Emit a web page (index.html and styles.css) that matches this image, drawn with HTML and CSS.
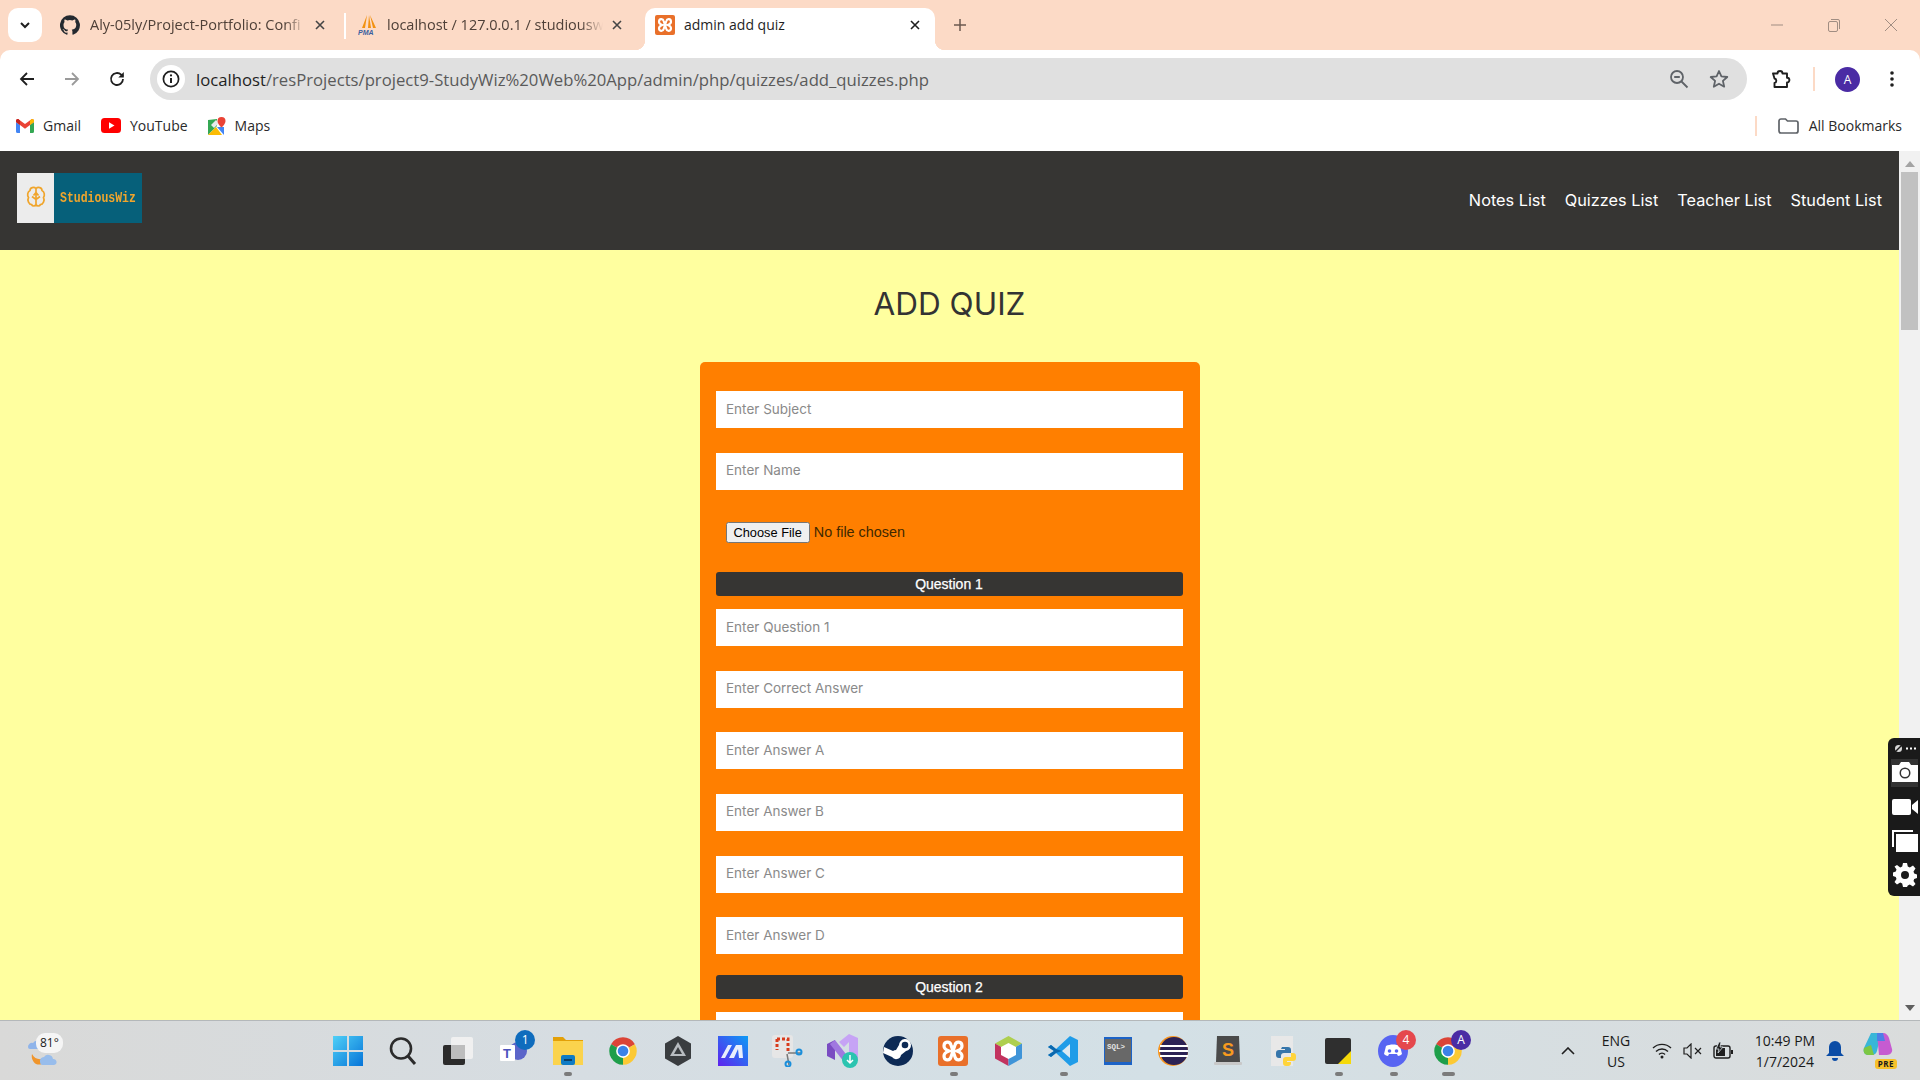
FILE: index.html
```html
<!DOCTYPE html>
<html lang="en">
<head>
<meta charset="utf-8">
<title>admin add quiz</title>
<link rel="stylesheet" href="styles.css">
</head>
<body>
<svg class="sprite" width="0" height="0">
  <symbol id="chrome" viewBox="0 0 48 48">
    <path fill="#db4437" d="M4.95 13A22 22 0 0 1 43.05 13L24 24Z"/>
    <path fill="#fcc934" d="M43.05 13A22 22 0 0 1 24 46L24 24Z"/>
    <path fill="#1e9e4a" d="M24 46A22 22 0 0 1 4.95 13L24 24Z"/>
    <circle cx="24" cy="24" r="11" fill="#fff"/>
    <circle cx="24" cy="24" r="8.5" fill="#3b82e8"/>
  </symbol>
  <symbol id="xampp" viewBox="0 0 30 30">
    <rect width="30" height="30" rx="3" fill="#e9702a"/>
    <path fill="none" stroke="#fff" stroke-width="3.2" d="M6 10c0-5 6-5 7-1l4 12c1 4 7 4 7-1 0-3-2-4-5-5 3-1 5-2 5-5 0-5-6-5-7-1L13 21c-1 4-7 4-7-1 0-3 2-4 5-5-3-1-5-2-5-5z"/>
  </symbol>
</svg>

<header class="tabstrip">
  <button class="tab-list" aria-label="Tabs">
    <svg width="14" height="14" viewBox="0 0 14 14"><path d="M3 5l4 4 4-4" fill="none" stroke="#1f1f1f" stroke-width="2"/></svg>
  </button>
  <div class="tab tab-first">
    <svg class="tab-icon" width="20" height="20" viewBox="0 0 24 24"><path fill="#24292f" d="M12 .3a12 12 0 0 0-3.8 23.4c.6.1.8-.3.8-.6v-2c-3.3.7-4-1.6-4-1.6-.6-1.4-1.4-1.8-1.4-1.8-1-.7.1-.7.1-.7 1.2.1 1.8 1.2 1.8 1.2 1 1.8 2.8 1.3 3.5 1 .1-.8.4-1.3.7-1.6-2.7-.3-5.500-1.3-5.500-6 0-1.2.5-2.3 1.3-3.1-.2-.4-.6-1.6 0-3.2 0 0 1-.3 3.4 1.2a11.500 11.500 0 0 1 6 0c2.3-1.5 3.3-1.2 3.3-1.2.6 1.6.2 2.8 0 3.2.9.8 1.3 1.9 1.3 3.2 0 4.6-2.8 5.6-5.500 5.900.5.4.9 1 .9 2.2v3.3c0 .3.1.7.8.6A12 12 0 0 0 12 .3"/></svg>
    <span class="tab-title">Aly-05ly/Project-Portfolio: Confi</span>
    <svg class="tab-close" width="12" height="12" viewBox="0 0 12 12"><path d="M2 2l8 8M10 2l-8 8" stroke="#454545" stroke-width="1.6"/></svg>
  </div>
  <span class="tab-sep"></span>
  <div class="tab tab-second">
    <svg class="tab-icon" width="20" height="20" viewBox="0 0 20 20">
      <path fill="#f29111" d="M9 0L4 13h3zM11 0l-1 13h3zM12 0l3 13h3z"/>
      <text x="0" y="19.5" class="pma">PMA</text>
    </svg>
    <span class="tab-title">localhost / 127.0.0.1 / studiousw</span>
    <svg class="tab-close" width="12" height="12" viewBox="0 0 12 12"><path d="M2 2l8 8M10 2l-8 8" stroke="#454545" stroke-width="1.6"/></svg>
  </div>
  <div class="tab tab-active">
    <svg class="tab-icon" width="20" height="20"><use href="#xampp"/></svg>
    <span class="tab-title tab-title-full">admin add quiz</span>
    <svg class="tab-close" width="12" height="12" viewBox="0 0 12 12"><path d="M2 2l8 8M10 2l-8 8" stroke="#1f1f1f" stroke-width="1.6"/></svg>
  </div>
  <svg class="new-tab" width="14" height="14" viewBox="0 0 14 14"><path d="M7 1v12M1 7h12" stroke="#6b5a50" stroke-width="1.5"/></svg>
  <div class="win-controls">
    <svg width="14" height="14" viewBox="0 0 14 14"><path d="M1 7h12" stroke="#a08d82" stroke-width="1"/></svg>
    <svg width="14" height="14" viewBox="0 0 14 14"><rect x="1.5" y="3.5" width="9" height="10" rx="1.5" fill="none" stroke="#a08d82"/><path d="M4 1.5h7a1.5 1.5 0 0 1 1.5 1.5v8" fill="none" stroke="#a08d82"/></svg>
    <svg width="14" height="14" viewBox="0 0 14 14"><path d="M1 1l12 12M13 1L1 13" stroke="#a08d82" stroke-width="1"/></svg>
  </div>
</header>

<nav class="toolbar">
  <svg class="tool-btn" width="18" height="18" viewBox="0 0 18 18"><path d="M16 9H3M9 3L3 9l6 6" fill="none" stroke="#1f1f1f" stroke-width="1.8"/></svg>
  <svg class="tool-btn" width="18" height="18" viewBox="0 0 18 18"><path d="M2 9h13M9 3l6 6-6 6" fill="none" stroke="#9a9a9a" stroke-width="1.8"/></svg>
  <svg class="tool-btn" width="18" height="18" viewBox="0 0 18 18"><path d="M15 9a6 6 0 1 1-1.8-4.3L15 6.5" fill="none" stroke="#1f1f1f" stroke-width="1.8"/><path d="M15.8 2v5.5h-5.5z" fill="#1f1f1f"/></svg>
  <div class="omnibox">
    <span class="site-info">
      <svg width="18" height="18" viewBox="0 0 18 18"><circle cx="9" cy="9" r="7.6" fill="none" stroke="#1f1f1f" stroke-width="1.7"/><path d="M9 8v5" stroke="#1f1f1f" stroke-width="2"/><circle cx="9" cy="5.4" r="1.1" fill="#1f1f1f"/></svg>
    </span>
    <span class="url"><b class="url-host">localhost</b>/resProjects/project9-StudyWiz%20Web%20App/admin/php/quizzes/add_quizzes.php</span>
    <svg class="omni-icon" width="20" height="20" viewBox="0 0 20 20"><circle cx="8" cy="8" r="6" fill="none" stroke="#5f6368" stroke-width="1.8"/><path d="M5.2 8h5.6M12.5 12.5l6 6" stroke="#5f6368" stroke-width="1.8"/></svg>
    <svg class="omni-icon" width="20" height="20" viewBox="0 0 20 20"><path d="M10 2l2.4 5.4 5.9.6-4.4 3.9 1.3 5.8L10 14.7l-5.2 3 1.3-5.8L1.700 8l5.900-.6z" fill="none" stroke="#5f6368" stroke-width="1.8" stroke-linejoin="round"/></svg>
  </div>
  <svg class="ext" width="20" height="20" viewBox="0 0 20 20"><path d="M2 4.500h4.500a2.500 2.500 0 0 1 5 0H16v4.200a2.400 2.400 0 0 1 0 4.800V18H3.500v-4a2.300 2.300 0 0 0 0-4.500z" fill="none" stroke="#1f1f1f" stroke-width="1.900" stroke-linejoin="round"/></svg>
  <span class="tool-sep"></span>
  <span class="avatar">A</span>
  <svg class="menu-dots" width="6" height="18" viewBox="0 0 6 18"><circle cx="3" cy="3" r="1.800" fill="#1f1f1f"/><circle cx="3" cy="9" r="1.800" fill="#1f1f1f"/><circle cx="3" cy="15" r="1.800" fill="#1f1f1f"/></svg>
</nav>

<div class="bookmarks">
  <span class="bookmark">
    <svg width="18" height="14" viewBox="0 0 18 14"><path fill="#4285f4" d="M0 3v9.500A1.500 1.500 0 0 0 1.500 14H4V6z"/><path fill="#34a853" d="M14 6v8h2.500a1.500 1.500 0 0 0 1.500-1.500V3z"/><path fill="#ea4335" d="M0 3l4 3 5 3.800L14 6l4-3V1.800C18 .3 16.300-.500 15.200.4L9 5 2.800.4C1.700-.500 0 .3 0 1.800z"/><path fill="#c5221f" d="M0 3l4 3V1.400L2.800.4C1.700-.500 0 .3 0 1.800z"/><path fill="#fbbc04" d="M14 1.400V6l4-3V1.800C18 .3 16.300-.500 15.200.4z"/></svg>
    Gmail
  </span>
  <span class="bookmark">
    <svg width="20" height="15" viewBox="0 0 20 15"><rect width="20" height="15" rx="3.500" fill="#f00"/><path d="M8 4.200v6.600l5.500-3.300z" fill="#fff"/></svg>
    YouTube
  </span>
  <span class="bookmark">
    <svg width="18" height="18" viewBox="0 0 18 18"><path fill="#34a853" d="M0 3l9-1v7l-9 9z"/><path fill="#fbbc04" d="M0 18l8-8 6 8z"/><path fill="#4285f4" d="M9 10l7 0v8z"/><path fill="#e8eaed" d="M3 8l5-5 3 3-5 5z"/><path fill="#ea4335" d="M13.500 0A4 4 0 0 0 9.500 4c0 3 4 6.500 4 6.500s4-3.500 4-6.500a4 4 0 0 0-4-4z"/></svg>
    Maps
  </span>
  <span class="bookmark-sep"></span>
  <span class="bookmark all-bookmarks">
    <svg width="21" height="16" viewBox="0 0 21 16"><path d="M1 3a2 2 0 0 1 2-2h4.500l2 2H18a2 2 0 0 1 2 2v8a2 2 0 0 1-2 2H3a2 2 0 0 1-2-2z" fill="none" stroke="#5f6368" stroke-width="1.700"/></svg>
    All Bookmarks
  </span>
</div>

<div class="viewport">
  <div class="page">
    <header class="site-nav">
      <div class="logo">
        <span class="logo-mark">
          <svg width="20" height="25" viewBox="0 0 20 24"><path d="M10 3C8 1 4 2 4 5 1.500 6 1 10 2.500 12 1 15 3 19 5.500 19c1 2 3.500 2 4.500 0 1 2 3.500 2 4.500 0 2.500 0 4.500-4 3-7C19 10 18.500 6 16 5c0-3-4-4-6-2zM10 3v18M6 11l4 3 4-3M10 7l-2.500 3M10 7l2.500 3" fill="none" stroke="#f0a52c" stroke-width="1.700"/></svg>
        </span>
        <span class="logo-text">StudiousWiz</span>
      </div>
      <ul class="nav-links">
        <li>Notes List</li>
        <li>Quizzes List</li>
        <li>Teacher List</li>
        <li>Student List</li>
      </ul>
    </header>
    <main class="content">
      <h1 class="title">ADD QUIZ</h1>
      <form class="quiz-card">
        <div class="fields intro">
          <input class="field" type="text" placeholder="Enter Subject">
          <input class="field" type="text" placeholder="Enter Name">
          <input class="file-field" type="file">
        </div>
        <section class="question">
          <h2 class="question-bar">Question 1</h2>
          <div class="fields">
            <input class="field" type="text" placeholder="Enter Question 1">
            <input class="field" type="text" placeholder="Enter Correct Answer">
            <input class="field" type="text" placeholder="Enter Answer A">
            <input class="field" type="text" placeholder="Enter Answer B">
            <input class="field" type="text" placeholder="Enter Answer C">
            <input class="field" type="text" placeholder="Enter Answer D">
          </div>
        </section>
        <section class="question">
          <h2 class="question-bar">Question 2</h2>
          <div class="fields">
            <input class="field" type="text" placeholder="Enter Question 2">
          </div>
        </section>
      </form>
    </main>
  </div>
  <div class="scrollbar">
    <svg width="10" height="6" viewBox="0 0 10 6"><path d="M5 0l5 6H0z" fill="#a3a3a3"/></svg>
    <span class="scroll-thumb"></span>
    <svg class="scroll-down" width="10" height="6" viewBox="0 0 10 6"><path d="M5 6L0 0h10z" fill="#5f5f5f"/></svg>
  </div>
  <aside class="capture-widget">
    <div class="capture-head">
      <svg width="11" height="11" viewBox="0 0 11 11"><circle cx="5.500" cy="5.500" r="3.500" fill="#d8d8d8"/><path d="M1 10L10 1" stroke="#1a1a1a" stroke-width="1.500"/></svg>
      <svg width="10" height="3" viewBox="0 0 10 3"><path d="M0 1.500h2M4 1.500h2M8 1.500h2" stroke="#fff" stroke-width="2"/></svg>
    </div>
    <span class="capture-btn capture-on">
      <svg width="26" height="20" viewBox="0 0 26 20"><path fill="#fff" fill-rule="evenodd" d="M0 3h7l2-3h8l2 3h7v17H0zM13 5.500a5.500 5.500 0 1 0 0 11 5.500 5.500 0 0 0 0-11zM13 7a4 4 0 1 1 0 8 4 4 0 0 1 0-8z"/></svg>
    </span>
    <span class="capture-btn">
      <svg width="26" height="18" viewBox="0 0 26 18"><rect width="19" height="16" y="1" rx="2" fill="#fff"/><path d="M20 7l6-5v14l-6-5z" fill="#fff"/></svg>
    </span>
    <span class="capture-btn">
      <svg width="26" height="22" viewBox="0 0 26 22"><path d="M0 0h21v2H2v15H0z" fill="#fff"/><path d="M4 4h22v18H4z" fill="#fff"/></svg>
    </span>
    <span class="capture-btn">
      <svg width="24" height="24" viewBox="0 0 24 24"><path fill="#fff" fill-rule="evenodd" d="M10 0h4l.8 3.500 2 .9L20 2.500l2.500 3-2 3 .7 2.100 2.800.9v3.500l-2.800.9-.7 2.100 2 3-2.500 2.500-3.200-1.900-2 .9L14 24h-4l-.8-3.500-2-.9L4 21.500 1.500 19l2-3-.7-2.100L0 13v-3.500l2.800-.9.7-2.100-2-3L4 2l3.200 2.400 2-.9zM12 8a4 4 0 1 0 0 8 4 4 0 0 0 0-8z"/></svg>
    </span>
  </aside>
</div>

<footer class="taskbar">
  <div class="weather">
    <svg width="36" height="36" viewBox="0 0 36 36"><path fill="#8fb4ea" d="M2 13a4 4 0 0 1 5-4 5 5 0 0 1 9 2v4H4a2 2 0 0 1-2-2z"/><path fill="#f0952b" d="M6 20c3 6 10 7 16 2-1 7-7 10-12 8-3-2-5-6-4-10z"/><path fill="#98bdec" d="M14 28a4 4 0 0 1 4-5 5 5 0 0 1 9 2 3 3 0 0 1 1 6H16a3 3 0 0 1-2-3z"/></svg>
    <span class="weather-temp">81°</span>
  </div>
  <div class="apps">
    <span class="app">
      <svg width="30" height="30" viewBox="0 0 30 30"><defs><linearGradient id="w" x1="0" y1="0" x2="1" y2="1"><stop offset="0" stop-color="#4fd0f7"/><stop offset="1" stop-color="#0674d8"/></linearGradient></defs><path fill="url(#w)" d="M0 0h14v14H0zM16 0h14v14H16zM0 16h14v14H0zM16 16h14v14H16z"/></svg>
    </span>
    <span class="app">
      <svg width="30" height="30" viewBox="0 0 30 30"><circle cx="13" cy="12.500" r="10" fill="none" stroke="#2b2b2b" stroke-width="2.600"/><path d="M20 20l7 8" stroke="#2b2b2b" stroke-width="3"/></svg>
    </span>
    <span class="app">
      <svg width="30" height="30" viewBox="0 0 30 30"><rect x="8" y="1" width="22" height="22" rx="2" fill="#f0f0f0"/><rect y="9" width="22" height="20" rx="2" fill="#2b2b2b"/><rect x="8" y="9" width="14" height="14" fill="#bdbdbd"/></svg>
    </span>
    <span class="app">
      <svg width="30" height="30" viewBox="0 0 30 30"><circle cx="20" cy="15" r="9" fill="#5b65c9"/><circle cx="24" cy="8" r="4" fill="#7b83eb"/><rect x="2" y="9" width="15" height="16" rx="1" fill="#fff"/><text x="5" y="22" class="teams-t">T</text></svg>
      <span class="badge badge-blue">1</span>
    </span>
    <span class="app">
      <svg width="30" height="30" viewBox="0 0 30 30"><path d="M0 1h10l3 3h17v3H0z" fill="#e3a008"/><path d="M0 5h30v24H0z" fill="#fbd34d"/><rect x="8" y="19" width="14" height="10" rx="2" fill="#0f7bc4"/><rect x="11" y="23" width="8" height="2" fill="#0a3e66"/></svg>
      <span class="run-dot"></span>
    </span>
    <span class="app">
      <svg width="30" height="30"><use href="#chrome"/></svg>
    </span>
    <span class="app">
      <svg width="26" height="30" viewBox="0 0 26 30"><path d="M13 0l13 7.500v15L13 30 0 22.500v-15z" fill="#3a3d40"/><path d="M13 6l8 14H5z" fill="#b8bcc0"/><path d="M13 11l4 7H9z" fill="#3a3d40"/></svg>
    </span>
    <span class="app">
      <svg width="30" height="30" viewBox="0 0 30 30"><defs><linearGradient id="m" x1="0" y1="1" x2="1" y2="0"><stop offset="0" stop-color="#5f22ee"/><stop offset="1" stop-color="#0c9bf5"/></linearGradient></defs><rect width="30" height="30" fill="url(#m)"/><path d="M3 22L10 9h4L7 22zM11 22l7-13h6l1 13h-4l-1-9-4 9z" fill="#e9eefc"/></svg>
    </span>
    <span class="app">
      <svg width="32" height="32" viewBox="0 0 32 32"><rect width="21" height="23" x="0" y="0" rx="3" fill="#e6e6e6"/><path d="M5 4h11v13M5 4v11" fill="none" stroke="#d83b1c" stroke-width="3" stroke-dasharray="3 2"/><path d="M15 19l2 11M16 18h14" stroke="#7a7a7a" stroke-width="1.500"/><circle cx="27" cy="17" r="2.500" fill="none" stroke="#1a8fdc" stroke-width="2"/><circle cx="16" cy="29" r="2.500" fill="none" stroke="#1a8fdc" stroke-width="2"/></svg>
    </span>
    <span class="app">
      <svg width="32" height="34" viewBox="0 0 32 34"><path d="M0 10l8-4v20l-8-4z" fill="#7a4cc2"/><path d="M8 6l14 18-5 4L3 10z" fill="#a078e0"/><path d="M22 0l9 4v22l-9 4-5-3 5-3V8l-5 5-5-5z" fill="#c6a3f5"/><circle cx="23" cy="26" r="8" fill="#2bc4b0"/><path d="M23 21v8M20 26l3 3 3-3" fill="none" stroke="#fff" stroke-width="1.500"/></svg>
    </span>
    <span class="app">
      <svg width="30" height="30" viewBox="0 0 30 30"><circle cx="15" cy="15" r="15" fill="#0d2a55"/><path d="M0 17l9 4a5 5 0 0 0 9-2l5-4a6 6 0 1 0-7-6l-3 5a5 5 0 0 0-3 1L1 11z" fill="#fff"/><circle cx="22" cy="9" r="3.300" fill="#0d2a55"/></svg>
    </span>
    <span class="app">
      <svg width="30" height="30"><use href="#xampp"/></svg>
      <span class="run-dot"></span>
    </span>
    <span class="app">
      <svg width="27" height="30" viewBox="0 0 27 30"><path d="M13.500 0L27 7.500 13.500 15 0 7.500z" fill="#aecf4f"/><path d="M0 7.500L13.500 15v15L0 22.500z" fill="#c2335f"/><path d="M27 7.500L13.500 15v15L27 22.500z" fill="#3f94d8"/><path d="M13.500 7L21 11v8l-7.500 4L6 19v-8z" fill="#fff"/></svg>
    </span>
    <span class="app">
      <svg width="30" height="30" viewBox="0 0 30 30"><path d="M22 0l8 4v22l-8 4L8 17l-5 4-3-2 6-4-6-4 3-2 5 4z" fill="#1f9ce8"/><path d="M22 8l-8 7 8 7z" fill="#dbe9f2"/><path d="M3 9L0 11l6 4-6 4 3 2 5-4 6-2-6-2z" fill="#0c68ae"/></svg>
      <span class="run-dot"></span>
    </span>
    <span class="app">
      <svg width="28" height="28" viewBox="0 0 28 28"><rect width="28" height="28" fill="#1c63c7"/><rect x="1" y="2" width="26" height="23" fill="#686868"/><text x="3" y="12" class="sql-t">SQL&gt;</text></svg>
    </span>
    <span class="app">
      <svg width="30" height="30" viewBox="0 0 30 30"><circle cx="15" cy="15" r="15" fill="#f7941e"/><circle cx="16" cy="15" r="14" fill="#2c2255"/><path d="M2 10h28M1 15h30M2 20h28" stroke="#fff" stroke-width="2"/></svg>
    </span>
    <span class="app">
      <svg width="28" height="30" viewBox="0 0 28 30"><path d="M3 0h22l1 26H2z" fill="#4a4a4a"/><rect y="26" width="28" height="3" rx="1" fill="#c8c8c8"/><text x="8" y="20" class="sublime-t">S</text></svg>
    </span>
    <span class="app">
      <svg width="30" height="30" viewBox="0 0 30 30"><rect x="3" width="22" height="30" fill="#e8e8e8"/><path d="M14 11h6a3 3 0 0 1 3 3v3h-7a3 3 0 0 0-3 3v2h-2a3 3 0 0 1-3-3v-2a3 3 0 0 1 3-3h6v-1h-4z" fill="#3776ab"/><path d="M23 17h2a3 3 0 0 1 3 3v2a3 3 0 0 1-3 3h-6v1h4v1a3 3 0 0 1-3 3h-2a3 3 0 0 1-3-3v-3a3 3 0 0 1 3-3h5z" fill="#ffd43b"/></svg>
    </span>
    <span class="app">
      <svg width="26" height="26" viewBox="0 0 26 26"><rect width="26" height="26" rx="2" fill="#2f2f2f"/><path d="M13 26l13-13v13z" fill="#f5d90a"/></svg>
      <span class="run-dot"></span>
    </span>
    <span class="app">
      <svg width="30" height="32" viewBox="0 0 30 32"><ellipse cx="15" cy="16" rx="15" ry="16" fill="#5865f2"/><path d="M8 11c4-2 10-2 14 0l2 8c-1 1-3 2-4 2l-1-2H11l-1 2c-1 0-3-1-4-2z" fill="#fff"/><circle cx="11.500" cy="16" r="1.800" fill="#5865f2"/><circle cx="18.500" cy="16" r="1.800" fill="#5865f2"/></svg>
      <span class="badge badge-red">4</span>
      <span class="run-dot"></span>
    </span>
    <span class="app">
      <svg width="30" height="30"><use href="#chrome"/></svg>
      <span class="badge badge-purple">A</span>
      <span class="run-dot run-wide"></span>
    </span>
  </div>
  <div class="tray">
    <svg class="tray-caret" width="14" height="8" viewBox="0 0 14 8"><path d="M1 7l6-6 6 6" fill="none" stroke="#1f1f1f" stroke-width="1.600"/></svg>
    <div class="tray-lang">ENG<br>US</div>
    <svg class="tray-wifi" width="20" height="16" viewBox="0 0 20 16"><path d="M1 5a13 13 0 0 1 18 0M4 8.500a8.500 8.500 0 0 1 12 0M7 11.500a4 4 0 0 1 6 0" fill="none" stroke="#1f1f1f" stroke-width="1.400"/><circle cx="10" cy="14" r="1.500" fill="#1f1f1f"/></svg>
    <svg class="tray-vol" width="20" height="16" viewBox="0 0 20 16"><path d="M1 5h3l4-4v14l-4-4H1z" fill="none" stroke="#1f1f1f" stroke-width="1.200"/><path d="M12 5l6 6M18 5l-6 6" stroke="#1f1f1f" stroke-width="1.200"/></svg>
    <svg class="tray-batt" width="20" height="18" viewBox="0 0 20 18"><rect x="1" y="4" width="16" height="12" rx="2" fill="none" stroke="#1f1f1f" stroke-width="1.400"/><path d="M3 6h9v8H3z" fill="#1f1f1f"/><rect x="18" y="8" width="2" height="4" fill="#1f1f1f"/><path d="M6 0L3 7h3L5 11l5-6H7l1-5z" fill="#1f1f1f" stroke="#d8dfe4" stroke-width=".8"/></svg>
    <div class="tray-time">10:49 PM<br>1/7/2024</div>
    <svg class="tray-bell" width="18" height="20" viewBox="0 0 18 20"><path d="M9 0a6 6 0 0 0-6 6v6l-3 3h18l-3-3V6a6 6 0 0 0-6-6zM6 17h6a3 3 0 0 1-6 0z" fill="#0c4da6"/></svg>
    <span class="tray-copilot">
      <svg width="30" height="28" viewBox="0 0 30 28"><path d="M8 0h10l-4 18c-1 3-3 4-6 4H5C1 22 0 18 1 15z" fill="#38b6d8"/><path d="M8 12l-7 3c-1 3 0 7 4 7h6z" fill="#7cc744"/><path d="M14 0h6c3 0 5 2 6 5l3 11c1 3-2 6-5 6h-8z" fill="#c65bd1"/><path d="M14 0h6l2 8h-8z" fill="#4d7fe6"/></svg>
      <span class="pre-tag">PRE</span>
    </span>
  </div>
</footer>
</body>
</html>
```

FILE: styles.css
```css
* { box-sizing: border-box; }

html, body {
  margin: 0;
  height: 100%;
  overflow: hidden;
}

body {
  display: flex;
  flex-direction: column;
  width: 1920px;
  height: 1080px;
  font-family: "Open Sans", "Liberation Sans", sans-serif;
  background: #fcdac6;
}

.sprite { position: absolute; }

/* Browser tab strip */
.tabstrip {
  display: flex;
  align-items: flex-end;
  height: 50px;
  flex: none;
  padding-left: 8px;
  background: #fcdac6;
}

.tab-list {
  display: flex;
  align-items: center;
  justify-content: center;
  width: 34px;
  height: 34px;
  margin-bottom: 8px;
  padding: 0;
  border: 0;
  border-radius: 10px;
  background: #fff;
}

.tab {
  position: relative;
  display: flex;
  align-items: center;
  flex: none;
  height: 42px;
  padding-bottom: 9px;
  font-size: 14.500px;
  color: #4f4038;
}

.tab-first { width: 302px; padding-left: 18px; padding-right: 18px; }
.tab-second { width: 299px; padding-left: 12px; padding-right: 22px; }

.tab-icon { flex: none; margin-right: 9px; }
.tab-first .tab-icon { margin-right: 10px; }

.tab-title {
  flex: 1;
  min-width: 0;
  overflow: hidden;
  white-space: nowrap;
  -webkit-mask-image: linear-gradient(to right, #000 90%, transparent);
  mask-image: linear-gradient(to right, #000 90%, transparent);
}

.tab-title-full {
  font-size: 14px;
  -webkit-mask-image: none;
  mask-image: none;
}

.tab-close { flex: none; margin-left: 8px; }

.tab-sep {
  flex: none;
  width: 2px;
  height: 26px;
  margin-bottom: 11px;
  background: #fff;
}

.tab-active {
  width: 290px;
  padding-left: 10px;
  padding-right: 14px;
  border-radius: 10px 10px 0 0;
  background: #fff;
  color: #1f1f1f;
}

.tab-active::before,
.tab-active::after {
  content: "";
  position: absolute;
  bottom: 0;
  width: 10px;
  height: 10px;
}

.tab-active::before {
  left: -10px;
  background: radial-gradient(circle at 0 0, transparent 10px, #fff 10.500px);
}

.tab-active::after {
  right: -10px;
  background: radial-gradient(circle at 100% 0, transparent 10px, #fff 10.500px);
}

.new-tab { margin: 0 0 18px 18px; flex: none; }

.win-controls {
  display: flex;
  gap: 43px;
  margin-left: auto;
  margin-bottom: 18px;
  padding-right: 22px;
}

/* Address bar */
.toolbar {
  display: flex;
  align-items: center;
  flex: none;
  height: 50px;
  padding: 8px 0 0 18px;
  background: #fff;
  border-radius: 10px 10px 0 0;
}

.tool-btn { margin-right: 27px; flex: none; }

.omnibox {
  display: flex;
  align-items: center;
  width: 1597px;
  height: 42px;
  margin-left: -3px;
  padding: 0 18px 0 7px;
  border-radius: 21px;
  background: #e0e0e0;
}

.site-info {
  display: flex;
  align-items: center;
  justify-content: center;
  width: 28px;
  height: 28px;
  border-radius: 50%;
  background: #fff;
  margin-right: 11px;
}

.url {
  flex: 1;
  font-size: 16.700px;
  color: #5a5a5a;
  white-space: nowrap;
}

.url-host { font-weight: 400; color: #1f1f1f; }

.omni-icon { margin-left: 20px; flex: none; }

.ext { margin-left: 24px; flex: none; }

.tool-sep {
  width: 2px;
  height: 24px;
  margin: 0 20px 0 22px;
  background: #fcdac6;
}

.avatar {
  display: flex;
  align-items: center;
  justify-content: center;
  width: 25px;
  height: 25px;
  border-radius: 50%;
  background: #4a2ba4;
  color: #fff;
  font-size: 12px;
}

.menu-dots { margin-left: 29px; flex: none; }

/* Bookmarks */
.bookmarks {
  display: flex;
  align-items: center;
  flex: none;
  height: 51px;
  padding: 0 18px 0 16px;
  background: #fff;
  font-size: 14px;
  color: #2a2a2a;
}

.bookmark {
  display: flex;
  align-items: center;
  gap: 9px;
  margin-right: 20px;
}

.bookmark-sep {
  width: 2px;
  height: 20px;
  margin-left: auto;
  margin-right: 21px;
  background: #fcdac6;
}

.all-bookmarks { margin-right: 0; gap: 10px; }

/* Page viewport */
.viewport {
  position: relative;
  display: flex;
  flex: none;
  height: 869px;
  overflow: hidden;
}

.page {
  flex: none;
  width: 1899px;
  background: #ffff9f;
}

.site-nav {
  display: flex;
  align-items: center;
  justify-content: space-between;
  height: 99px;
  padding: 0 17px 9px 17px;
  background: #363533;
}

.logo {
  display: flex;
  width: 125px;
  height: 50px;
  margin-top: 3px;
  background: #06607a;
}

.logo-mark {
  display: flex;
  align-items: center;
  justify-content: center;
  width: 37px;
  background: #ececec;
}

.logo-text {
  align-self: center;
  margin-left: 6px;
  font-family: "Liberation Mono", monospace;
  font-size: 11.500px;
  font-weight: 700;
  color: #f0a52c;
  transform: scaleY(1.3);
}

.nav-links {
  display: flex;
  gap: 19px;
  margin: 7px 0 0;
  padding: 0;
  list-style: none;
  font-family: Inter, "Liberation Sans", sans-serif;
  font-size: 16.300px;
  color: #fff;
}

.content { padding-top: 30px; }

.title {
  margin: 0 0 34px;
  text-align: center;
  font-family: Inter, "Liberation Sans", sans-serif;
  font-size: 31.500px;
  line-height: 48px;
  font-weight: 400;
  color: #333;
}

.quiz-card {
  width: 500px;
  margin: 0 auto;
  padding: 29px 17px 40px 16px;
  background: #ff7f00;
  border-radius: 5px;
}

.fields {
  display: flex;
  flex-direction: column;
  gap: 24.600px;
}

.intro { margin-bottom: 23px; }

.field {
  display: block;
  width: 100%;
  height: 37px;
  padding: 0 10.500px 2px;
  border: 0;
  outline: 0;
  background: #fff;
  font-family: Inter, "Liberation Sans", sans-serif;
  font-size: 13.500px;
}

.field::placeholder { color: #8a8a8a; }

.file-field {
  display: block;
  width: 100%;
  height: 35px;
  padding: 8px 10px;
  font-family: "Liberation Sans", sans-serif;
  font-size: 14.400px;
  color: #402800;
}

.file-field::file-selector-button {
  font-size: 12.800px;
  color: #000;
}

.question { margin-bottom: 21px; }

.question-bar {
  height: 24px;
  margin: 0 0 13px;
  border-radius: 3px;
  background: #363533;
  color: #fff;
  text-align: center;
  font-family: "Liberation Sans", sans-serif;
  font-size: 14px;
  line-height: 24px;
  font-weight: 400;
  -webkit-text-stroke: .25px #fff;
}

/* Scrollbar */
.scrollbar {
  position: relative;
  display: flex;
  flex-direction: column;
  align-items: center;
  flex: none;
  width: 21px;
  padding-top: 10px;
  background: #f1f1f1;
}

.scroll-thumb {
  width: 17px;
  height: 158px;
  margin-top: 5px;
  background: #c1c1c1;
}

.scroll-down { margin-top: auto; margin-bottom: 9px; }

/* Floating capture tool */
.capture-widget {
  position: absolute;
  top: 587px;
  right: 0;
  display: flex;
  flex-direction: column;
  align-items: center;
  width: 32px;
  height: 158px;
  padding: 3px 2px 0 3px;
  background: #1a1a1a;
  border-radius: 6px 0 0 6px;
}

.capture-head {
  display: flex;
  align-items: center;
  justify-content: space-between;
  width: 100%;
  height: 14px;
  padding: 0 2px;
}

.capture-btn {
  display: flex;
  align-items: center;
  justify-content: center;
  flex: none;
  width: 100%;
  height: 28px;
  margin-top: 6px;
}

.capture-btn svg { flex: none; }

.capture-on {
  margin-top: 4px;
  padding-bottom: 2px;
  background: #333;
}

/* Windows taskbar */
.taskbar {
  position: relative;
  display: flex;
  align-items: center;
  flex: none;
  height: 60px;
  border-top: 1px solid #b4b8ba;
  background: linear-gradient(90deg, #d9d9d8 0%, #d6dde2 30%, #d3e0e6 60%, #dadcdc 100%);
  font-size: 14px;
  color: #1a1a1a;
}

.weather {
  position: relative;
  flex: none;
  width: 320px;
  padding: 2px 0 0 26px;
}

.weather svg { display: block; }

.weather-temp {
  position: absolute;
  top: 1px;
  left: 36px;
  padding: 0 4px;
  border-radius: 9px;
  background: #f5f5f5;
  font-size: 12px;
  line-height: 20px;
}

.apps { display: flex; flex: none; }

.app {
  position: relative;
  display: flex;
  align-items: center;
  justify-content: center;
  flex: none;
  width: 55.050px;
  height: 59px;
}

.badge {
  position: absolute;
  top: 9px;
  left: 30px;
  width: 20px;
  height: 20px;
  border-radius: 50%;
  color: #fff;
  text-align: center;
  font-size: 12px;
  line-height: 20px;
}

.badge-blue { background: #0f6cbd; }
.badge-red { background: #e5484d; }
.badge-purple { background: #4a2ba4; }

.run-dot {
  position: absolute;
  left: 24px;
  bottom: 4px;
  width: 8px;
  height: 4px;
  border-radius: 2px;
  background: #7b7b7b;
}

.run-wide { left: 21px; width: 13px; }

.tray {
  display: flex;
  align-items: center;
  flex: 1;
  min-width: 0;
  height: 100%;
}

.tray-caret { margin-left: 85px; flex: none; }

.tray-lang {
  flex: none;
  width: 48px;
  margin-left: 17px;
  text-align: center;
  line-height: 21px;
}

.tray-wifi { margin-left: 12px; flex: none; }
.tray-vol { margin-left: 11px; flex: none; }
.tray-batt { margin-left: 10px; flex: none; }

.tray-time {
  flex: none;
  width: 80px;
  margin-left: 12px;
  text-align: center;
  line-height: 21px;
  white-space: nowrap;
}

.tray-bell { margin-left: 1px; flex: none; }

.tray-copilot {
  position: relative;
  display: flex;
  flex: none;
  margin-left: 19px;
  width: 34px;
  height: 36px;
}

.pre-tag {
  position: absolute;
  right: 0;
  bottom: 0;
  padding: 0 3px;
  border-radius: 3px;
  background: #f7c12a;
  font-size: 8px;
  line-height: 10px;
  font-weight: 700;
  letter-spacing: .5px;
}

/* Text inside small app icons */
.pma { font: italic 700 7px "Liberation Sans", sans-serif; fill: #3b5ea0; }
.teams-t { font: 700 13px "Liberation Sans", sans-serif; fill: #4b53bc; }
.sql-t { font: 700 7.500px "Liberation Mono", monospace; fill: #e4e4e4; }
.sublime-t { font: 700 18px "Liberation Sans", sans-serif; fill: #f79a1f; }
```
